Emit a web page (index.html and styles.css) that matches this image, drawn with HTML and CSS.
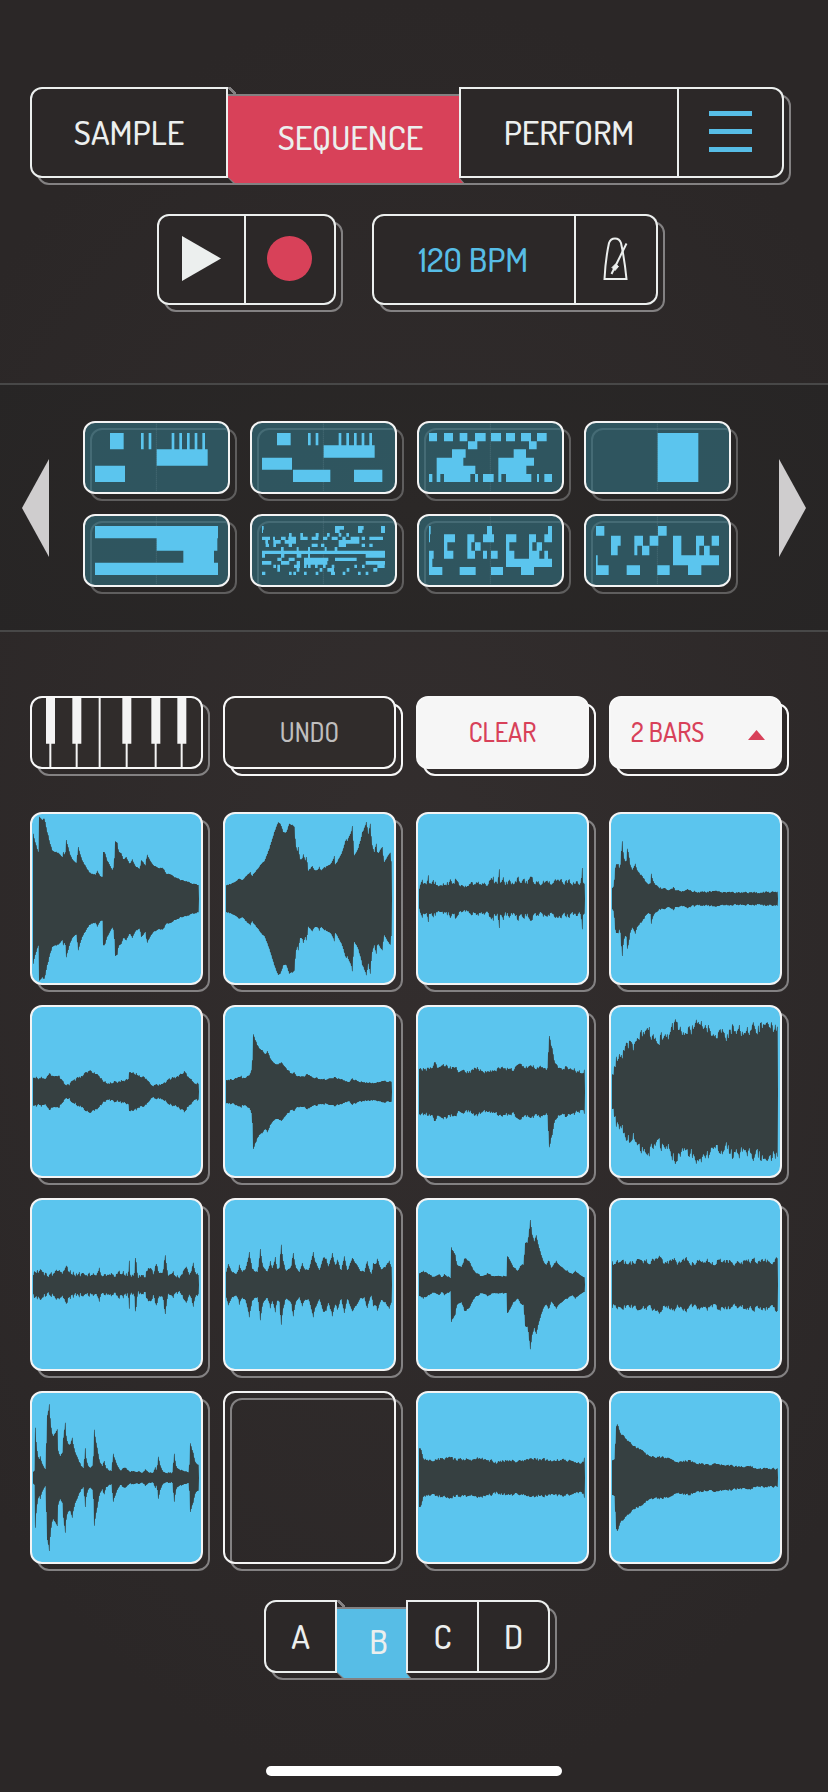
FILE: index.html
```html
<!DOCTYPE html>
<html lang="en">
<head>
<meta charset="utf-8">
<meta name="viewport" content="width=device-width, initial-scale=1">
<title>Sequence</title>
<link rel="stylesheet" href="styles.css">
</head>
<body>
<header class="header">
  <nav class="tabs tabs-main slab" aria-label="Mode">
    <button class="tab" type="button">SAMPLE</button>
    <button class="tab is-active" type="button"><span class="tab-label">SEQUENCE</span></button>
    <button class="tab" type="button">PERFORM</button>
    <button class="tab" type="button" aria-label="Menu">
      <svg width="43" height="41" viewBox="0 0 43 41" aria-hidden="true"><path d="M0 0h43v5H0zM0 18h43v5H0zM0 36h43v5H0z" fill="#57bde6"/></svg>
    </button>
  </nav>
  <div class="transport">
    <div class="tabs tabs-play slab">
      <button class="tab" type="button" aria-label="Play">
        <svg width="39" height="45" viewBox="0 0 39 45" aria-hidden="true"><path d="M0 0L39 22.500 0 45z" fill="#ecefee"/></svg>
      </button>
      <button class="tab" type="button" aria-label="Record">
        <svg width="45" height="45" viewBox="0 0 45 45" aria-hidden="true"><circle cx="22.500" cy="22.500" r="22.500" fill="#d84159"/></svg>
      </button>
    </div>
    <div class="tabs tabs-tempo slab">
      <button class="tab tab-bpm" type="button">120 BPM</button>
      <button class="tab" type="button" aria-label="Metronome">
        <svg width="26" height="44" viewBox="0 0 26 44" fill="none" stroke="#ecefee" stroke-width="2" aria-hidden="true"><path d="M1.500 42Q2.500 22 6 6Q7.500 1.500 12 1.500Q16.500 1.500 18 6Q21.500 22 23.500 42z"/><path d="M23.500 6.500L8.500 37"/><path d="M12.500 27L15.500 29.500 12 33.500 9 30.500z" fill="#ecefee" stroke-width="1"/></svg>
      </button>
    </div>
  </div>
</header>

<section class="strip" aria-label="Patterns">
  <button class="arrow" type="button" aria-label="Previous patterns">
    <svg width="27" height="98" viewBox="0 0 27 98" aria-hidden="true"><path d="M27 0V98L0 49z" fill="#cfcdce"/></svg>
  </button>
  <div class="patterns" id="patterns"></div>
  <button class="arrow" type="button" aria-label="Next patterns">
    <svg width="27" height="98" viewBox="0 0 27 98" aria-hidden="true"><path d="M0 0V98L27 49z" fill="#cfcdce"/></svg>
  </button>
</section>

<main class="main">
  <div class="tools">
    <div class="slab">
      <button class="tool tool-keys" type="button" aria-label="Keyboard">
        <svg viewBox="0 0 507 207" preserveAspectRatio="none" fill="#f4f4f4" aria-hidden="true"><path d="M42 0h27v137H42zM121 0h27v137h-27zM271 0h27v137h-27zM358 0h27v137h-27zM436 0h27v137h-27zM52 130h6v77h-6zM131 130h6v77h-6zM200 0h6v207h-6zM281 130h6v77h-6zM368 130h6v77h-6zM446 130h6v77h-6z"/></svg>
      </button>
    </div>
    <div class="slab slab-bright"><button class="tool tool-undo" type="button">UNDO</button></div>
    <div class="slab slab-bright"><button class="tool tool-light" type="button">CLEAR</button></div>
    <div class="slab slab-bright">
      <select class="tool tool-light tool-bars" aria-label="Pattern length"><option>2 BARS</option></select>
      <svg class="caret" width="17" height="10" viewBox="0 0 17 10" aria-hidden="true"><path d="M8.500 0L17 10H0z" fill="#d84159"/></svg>
    </div>
  </div>
  <div class="pads" id="pads"></div>
</main>

<footer class="footer">
  <nav class="tabs tabs-banks slab" aria-label="Bank">
    <button class="tab" type="button">A</button>
    <button class="tab is-active tab-blue" type="button"><span class="tab-label">B</span></button>
    <button class="tab" type="button">C</button>
    <button class="tab" type="button">D</button>
  </nav>
  <div class="home-bar"></div>
</footer>
<script src="script.js"></script>
</body>
</html>
```
FILE: styles.css
```css
* { box-sizing: border-box; }

body {
  margin: 0;
  min-height: 100vh;
  font-family: "Dosis", "Liberation Sans Narrow", "Open Sans Condensed", Roboto, sans-serif;
  font-weight: 500;
  background: radial-gradient(ellipse 70% 50% at 50% 50%, #332e2e, #2b2727);
  color: #ecefee;
}

button, select {
  margin: 0;
  padding: 0;
  border: 0;
  background: none;
  color: inherit;
  font: inherit;
  cursor: pointer;
}

svg { display: block; }

/* Raised control with an offset outline behind it */
.slab {
  position: relative;
  isolation: isolate;
}

.slab::before {
  content: "";
  position: absolute;
  inset: 7px -7px -7px 7px;
  border: 2px solid #838182;
  border-radius: 12px;
  z-index: -1;
}

.slab-bright::before { border-color: #f8f8f8; }

/* Header */
.header { padding: 87px 44px 78px 30px; }

.tabs { display: grid; }

.tab {
  position: relative;
  z-index: 1;
  display: flex;
  align-items: center;
  justify-content: center;
  padding-bottom: 2px;
  border: solid #ecefee;
  border-width: 2px 2px 2px 0;
  background: #2c2828;
}

.tab:first-child {
  border-left-width: 2px;
  border-radius: 12px 0 0 12px;
}

.tab:last-child { border-radius: 0 12px 12px 0; }

.tab.is-active {
  z-index: 0;
  border: 0;
  background: linear-gradient(45deg, transparent 42%, #838182 42% 64%, transparent 64%) 0 0 / 8px 8px no-repeat;
}

.tab.is-active + .tab { border-left-width: 2px; }

.tab.is-active::before,
.tab.is-active::after {
  content: "";
  position: absolute;
  inset: 7px -7px -7px 0;
  background: #838182;
  clip-path: polygon(0 0, calc(100% - 7px) 0, calc(100% - 7px) calc(100% - 8px), 100% 100%, 7px 100%, 0 calc(100% - 7px));
}

.tab.is-active::after {
  inset: 9px -4px -5px 0;
  background: #d84159;
  clip-path: polygon(0 0, calc(100% - 4px) 0, calc(100% - 4px) calc(100% - 5px), 100% 100%, 7px 100%, 0 calc(100% - 6px));
}

.tab.tab-blue::after { background: #57bde6; }

.tab-label {
  position: relative;
  z-index: 1;
  padding: 10px 0 0 14px;
}

.tabs-main, .transport .tabs {
  height: 91px;
  font-size: 34px;
}

.tabs-main { grid-template-columns: 198fr 231fr 220fr 105fr; }

.transport {
  display: flex;
  justify-content: center;
  gap: 36px;
  margin-top: 36px;
}

.tabs-play {
  width: 179px;
  grid-template-columns: 1fr 1fr;
}

.tabs-tempo {
  width: 286px;
  grid-template-columns: 204fr 82fr;
}

.tab-bpm { color: #57bde6; }

/* Pattern strip */
.strip {
  display: flex;
  align-items: center;
  padding: 36px 22px;
  border: solid #484848;
  border-width: 2px 0;
  background: radial-gradient(ellipse 60% 100% at 50% 50%, #2b2827, #272525);
}

.patterns {
  flex: 1;
  display: grid;
  grid-template-columns: repeat(4, 1fr);
  gap: 20px;
  margin: 0 48px 0 34px;
  padding-bottom: 7px;
}

.patterns .slab::before { border-color: #5f5e5e; }

.pattern {
  display: block;
  width: 100%;
  height: 73px;
  border: 2px solid #f4f4f4;
  border-radius: 12px;
  background: rgba(52, 117, 134, 0.6);
}

.pattern svg {
  width: 100%;
  height: 100%;
}

/* Tools and pads */
.main { padding: 64px 46px 36px 30px; }

.tools, .pads {
  display: grid;
  grid-template-columns: repeat(4, 1fr);
  gap: 20px;
}

.tool {
  display: block;
  width: 100%;
  height: 73px;
  padding-bottom: 2px;
  border: 2px solid #f8f8f8;
  border-radius: 12px;
  background: #302c2b;
  font-size: 26px;
  text-align: center;
}

.tool-keys { padding: 0; }

.tool svg {
  width: 100%;
  height: 100%;
}

.tool-undo { color: #bfbebe; }

.tool-light {
  background: #f6f6f6;
  color: #d84159;
}

.tool-bars {
  appearance: none;
  padding-left: 20px;
  text-align: left;
}

.caret {
  position: absolute;
  top: 34px;
  right: 17px;
  pointer-events: none;
}

.pads { margin-top: 43px; }

.pad {
  display: block;
  width: 100%;
  aspect-ratio: 1;
  overflow: hidden;
  border: 2px solid #f4f4f4;
  border-radius: 12px;
  background: #5bc5ee;
}

.pad-empty { background: none; }

.pad svg {
  width: 100%;
  height: 100%;
}

/* Banks */
.footer {
  display: flex;
  flex-direction: column;
  align-items: center;
  padding-bottom: 16px;
}

.tabs-banks {
  width: 286px;
  height: 73px;
  grid-template-columns: 73fr 69fr 73fr 71fr;
  margin-right: 14px;
  font-size: 34px;
}

.home-bar {
  width: 296px;
  height: 10px;
  margin-top: 93px;
  border-radius: 5px;
  background: #fff;
}
```
FILE: script.js
```js
// Pattern previews: each row lists x, width pairs; "tops" holds the y of every row.
const even = (n) => Array.from({ length: n + 1 }, (_, i) => 36 + Math.round((147 * i) / n));
const patterns = [
  { tops: even(3), rows: [[81,41,174,8,197,8,266,8,289,8,312,8,335,8,358,8], [221,153], [36,90]] },
  { tops: even(4), rows: [[81,41,174,8,197,8,266,8,289,8,312,8,335,8,358,8], [221,153], [36,90], [129,112,312,85]] },
  { tops: even(6), rows: [
    [36,24,81,27,128,23,174,32,222,30,267,27,312,30,360,29], [153,28,336,23], [105,41,290,37],
    [59,80,244,107], [59,116,244,84], [36,10,59,11,81,79,174,9,198,32,244,9,267,76,360,6,382,23]] },
  { tops: even(1), rows: [[221,122]] },
  { tops: even(4), rows: [[36,369], [221,182], [301,92], [36,369]] },
  { tops: even(14), rows: [
    [36,5,255,27,324,17,393,12], [36,3,255,14,324,13,393,12], [117,8,151,8,197,9,231,8,266,8,289,8],
    [36,24,69,6,93,14,115,23,151,22,185,20,219,13,245,18,277,10,302,26,335,10,358,41], [46,8,70,22,104,34,266,62],
    [47,10,70,8,116,10,185,18,213,10,266,22,335,10,358,10], [93,8,140,6,174,6,224,6,254,8], [36,369],
    [36,9,93,10,140,14,174,6,347,58], [82,13,116,18,162,73,255,65], [36,28,93,25,140,10,162,70,347,58],
    [70,8,82,8,132,18,162,8,174,8,195,8,219,8,245,8,313,8,336,8,382,22],
    [82,8,140,8,209,8,232,20,290,8,370,12], [36,10,117,8,130,8,162,8,197,8,243,12,278,8,324,8,347,8]] },
  { tops: even(6), rows: [
    [36,5,210,15,393,12], [36,3,81,33,151,21,198,33,267,31,336,21,382,23], [81,10,151,12,174,17,267,10,336,10,359,16],
    [36,14,81,28,151,23,198,12,222,20,267,25,336,31,382,11], [36,10,267,138], [36,40,128,48,222,36,312,39]] },
  { tops: even(5), rows: [
    [36,25,222,26], [81,29,151,26,197,26,267,25,336,24,383,22], [81,20,151,9,174,22,267,25,336,10,360,17],
    [36,5,267,138], [36,38,128,40,220,37,312,40]] }
];

document.getElementById('patterns').innerHTML = patterns.map(({ tops, rows }, n) => {
  let d = '';
  rows.forEach((row, i) => {
    for (let k = 0; k < row.length; k += 2) {
      d += `M${row[k]} ${tops[i]}h${row[k + 1]}V${tops[i + 1]}h${-row[k + 1]}z`;
    }
  });
  return `<div class="slab"><button class="pattern" type="button" aria-label="Pattern ${n + 1}">
    <svg viewBox="6 6 429 207" preserveAspectRatio="none"><path d="M220 8V212" stroke="#5b7f88" stroke-width="2" stroke-dasharray="3 3"/><path d="${d}" fill="#5bc5ee"/></svg>
  </button></div>`;
}).join('');

// Sample envelopes: x, amplitude pairs across 498 units, with a grain amount for the fine detail.
const waves = [
  { grain: 2, p: [0,195,8,165,18,135,20,246,24,240,27,232,30,240,35,240,45,190,58,145,75,138,88,125,92,140,96,125,100,175,112,130,120,115,131,107,135,155,150,110,165,85,175,75,188,72,193,82,205,66,208,66,211,140,215,140,225,110,240,84,244,120,247,170,252,168,258,140,265,135,272,115,280,125,290,105,298,118,308,98,320,88,325,115,337,100,342,132,355,108,370,95,392,90,400,75,420,68,445,55,460,53,475,46,498,40] },
  { grain: 2, p: [0,40,5,42,20,46,40,60,48,56,72,80,78,68,92,85,108,108,115,110,130,150,145,200,156,228,163,225,172,200,180,198,190,225,200,222,205,215,207,180,213,140,217,155,222,118,228,118,232,133,238,115,242,125,247,84,258,98,266,86,275,86,280,95,285,85,295,95,305,97,315,105,325,128,328,103,345,130,360,178,363,170,375,200,380,218,384,130,395,145,410,200,422,230,427,195,433,225,438,160,445,140,450,165,455,135,468,155,475,110,492,138,498,100] },
  { grain: 10, p: [0,30,3,42,8,50,24,46,27,70,30,46,92,45,95,58,99,45,108,45,110,60,114,44,200,44,215,55,218,62,222,66,226,46,237,46,240,88,243,46,252,64,256,46,290,50,297,66,301,46,315,60,318,46,338,60,341,64,345,45,390,52,420,52,440,52,486,45,489,92,492,48,498,45] },
  { grain: 4, p: [0,32,5,35,10,90,14,102,20,100,24,85,30,172,36,120,42,105,47,150,55,100,62,85,70,105,76,82,88,70,95,60,105,45,115,42,118,72,124,50,140,35,150,30,175,28,184,34,190,25,215,20,225,28,260,20,300,22,340,20,400,18,440,17,498,20] },
  { grain: 5, p: [0,42,10,45,15,36,25,45,40,42,50,55,55,44,75,48,85,38,95,24,105,22,120,30,140,45,165,60,185,58,200,45,215,30,225,25,250,30,265,35,285,38,290,58,310,55,325,42,335,44,345,30,355,20,365,17,380,18,395,28,410,38,425,42,440,50,455,62,465,45,475,38,485,25,498,24] },
  { grain: 3, p: [0,35,25,38,45,48,50,40,70,48,78,70,82,172,90,150,100,130,108,125,117,108,124,122,135,95,155,82,167,88,180,70,195,55,205,58,215,45,235,45,245,52,258,42,285,38,300,35,310,40,328,44,345,35,370,28,378,40,395,32,420,28,450,25,465,30,498,30] },
  { grain: 8, p: [0,68,30,68,48,88,55,72,85,78,115,65,150,62,175,74,190,62,220,64,255,70,285,66,303,84,315,72,360,75,385,70,391,165,400,130,408,85,420,72,440,75,460,66,480,62,490,55,498,66] },
  { grain: 24, p: [0,52,6,55,12,90,18,98,28,108,40,125,53,148,60,132,72,135,80,140,84,178,95,175,110,170,125,172,145,170,165,172,180,180,192,205,200,182,222,168,250,198,265,190,288,200,305,172,330,188,345,172,365,198,385,182,400,175,424,208,440,190,465,208,480,195,498,195] },
  { grain: 10, p: [0,25,5,40,30,38,50,26,75,36,90,30,100,52,110,36,130,34,150,26,170,28,190,28,200,46,205,28,250,32,280,34,285,30,288,72,292,30,305,30,308,80,314,26,335,22,345,50,355,48,362,25,370,62,378,28,390,30,397,88,404,26,420,40,430,22,445,30,460,54,470,30,480,66,486,38,498,25] },
  { grain: 4, p: [0,35,8,62,15,42,25,35,35,38,40,60,48,35,60,50,70,98,80,45,95,38,103,105,110,60,125,38,133,70,140,45,148,80,153,45,160,50,165,120,172,70,180,40,195,48,201,95,210,50,220,35,229,65,238,45,248,40,261,98,270,65,280,40,292,80,300,78,308,55,320,95,328,60,335,75,345,40,355,85,365,42,380,80,395,55,405,40,415,38,423,70,435,30,443,65,450,60,455,78,465,45,475,50,490,70,498,45] },
  { grain: 3, p: [0,33,13,40,30,32,45,22,60,30,68,22,76,32,90,22,94,20,96,112,108,90,115,60,128,52,137,78,150,70,165,42,185,26,205,34,225,25,262,25,266,85,275,70,285,50,297,40,303,55,313,60,320,125,326,125,334,192,340,150,346,130,352,148,360,110,375,65,383,60,389,72,398,50,412,70,425,52,445,42,460,32,470,40,485,28,498,22] },
  { grain: 11, p: [0,66,30,62,60,66,100,70,140,78,160,68,184,74,200,66,222,76,240,66,270,70,285,78,300,68,338,74,360,66,400,70,440,70,470,70,498,74] },
  { grain: 3, p: [0,15,4,20,7,150,12,80,18,50,22,62,30,35,38,25,42,180,49,220,54,150,60,125,65,130,72,145,76,80,82,65,88,75,92,120,96,165,102,110,110,95,117,120,125,85,135,55,145,35,152,28,156,88,162,45,170,30,180,35,184,142,192,90,200,50,208,35,213,50,220,28,235,20,241,72,250,45,262,22,275,30,290,18,330,16,337,25,345,15,362,15,366,30,371,22,376,62,384,30,392,18,418,15,424,70,430,35,440,25,460,18,468,18,472,102,480,75,488,45,498,35] },
  null,
  { grain: 6, p: [0,85,8,80,14,50,50,52,80,58,120,54,150,54,175,60,200,56,230,48,270,52,310,50,340,56,390,50,430,56,455,52,470,45,490,48,498,60] },
  { grain: 4, p: [0,48,8,55,12,150,17,160,25,135,40,118,52,108,65,95,75,88,90,82,105,70,120,65,160,60,180,52,205,48,230,52,250,43,300,40,345,38,380,34,400,30,420,34,430,27,480,28,498,25] }
];

const STEP = 3;
const outline = ({ grain, p }, seed) => {
  const cols = new Array(498 / STEP).fill(0);
  let k = 0;
  let state = seed * 7919 + 17;
  let drift = 0;
  for (let i = 0; i < cols.length; i++) {
    const x = i * STEP + 1;
    while (k + 4 < p.length && p[k + 2] < x) k += 2;
    const t = Math.min(1, (x - p[k]) / (p[k + 2] - p[k]));
    state = (state * 16807) % 2147483647;
    drift = drift * 0.45 + (state / 2147483647 - 0.5) * 1.5;
    cols[i] = p[k + 1] + (p[k + 3] - p[k + 1]) * t + drift * grain;
  }
  // Peaks narrower than a column keep their full height.
  for (let i = 0; i < p.length; i += 2) {
    const c = Math.min(cols.length - 1, Math.floor(p[i] / STEP));
    if (p[i + 1] > cols[c]) cols[c] = p[i + 1];
  }
  const top = [];
  const bottom = [];
  cols.forEach((a, i) => {
    const x = i * STEP;
    const y = Math.round(a);
    top.push(`${x} ${-y} ${x + 2} ${-y}`);
    bottom.unshift(`${x + 2} ${y} ${x} ${y}`);
  });
  return `M${top.join(' ')} 498 0 ${bottom.join(' ')}z`;
};

document.getElementById('pads').innerHTML = waves.map((wave, n) => {
  const art = wave
    ? `<svg viewBox="-3 -254 507 507" preserveAspectRatio="none"><path d="${outline(wave, n + 1)}" fill="#364041"/></svg>`
    : '';
  return `<div class="slab"><button class="pad${wave ? '' : ' pad-empty'}" type="button" aria-label="Pad ${n + 1}">${art}</button></div>`;
}).join('');
```
